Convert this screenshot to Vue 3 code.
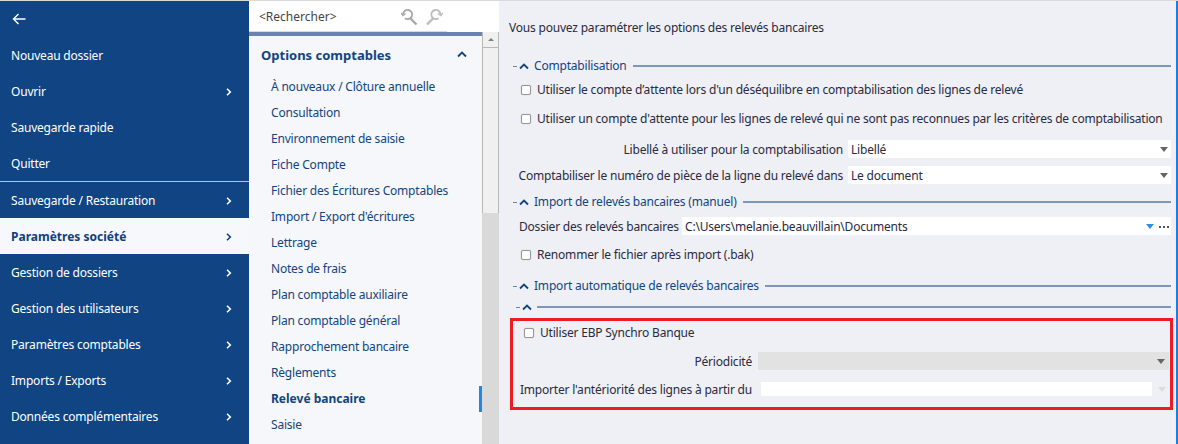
<script setup>
const mainItems = [
  { label: 'Nouveau dossier' },
  { label: 'Ouvrir', arrow: true },
  { label: 'Sauvegarde rapide' },
  { label: 'Quitter' }
]
const lowerItems = [
  { label: 'Sauvegarde / Restauration' },
  { label: 'Paramètres société', active: true },
  { label: 'Gestion de dossiers' },
  { label: 'Gestion des utilisateurs' },
  { label: 'Paramètres comptables' },
  { label: 'Imports / Exports' },
  { label: 'Données complémentaires' }
]
const options = [
  'À nouveaux / Clôture annuelle', 'Consultation', 'Environnement de saisie', 'Fiche Compte',
  'Fichier des Écritures Comptables', "Import / Export d'écritures", 'Lettrage', 'Notes de frais',
  'Plan comptable auxiliaire', 'Plan comptable général', 'Rapprochement bancaire', 'Règlements',
  'Relevé bancaire', 'Saisie'
]
</script>

<template>
  <div class="app">
    <nav class="side">
      <div class="back">
        <svg width="14" height="12" viewBox="0 0 14 12"><path d="M6.500 1 1.500 6l5 5M1.500 6H13.500" fill="none" stroke="#fff" stroke-width="1.400"/></svg>
      </div>
      <div v-for="i in mainItems" :key="i.label" class="nav">
        <span>{{ i.label }}</span>
        <svg v-if="i.arrow" width="6" height="8" viewBox="0 0 6 8"><path d="M1 .8 4.300 4 1 7.200" fill="none" stroke="currentColor" stroke-width="1.600"/></svg>
      </div>
      <div class="sep"></div>
      <div v-for="i in lowerItems" :key="i.label" class="nav" :class="{ active: i.active }">
        <span>{{ i.label }}</span>
        <svg width="6" height="8" viewBox="0 0 6 8"><path d="M1 .8 4.300 4 1 7.200" fill="none" stroke="currentColor" stroke-width="1.600"/></svg>
      </div>
    </nav>

    <section class="mid">
      <div class="search">
        <span class="ph">&lt;Rechercher&gt;</span>
        <svg class="mag" width="18" height="18" viewBox="0 0 18 18" fill="none" stroke="#a9a9a9"><path d="M2 6.500a4.600 4.600 0 1 1 2 3.800" stroke-width="1.800"/><path d="M0 5l2 2.600L4.500 5.500" stroke-width="1.400"/><path d="m9.500 10.500 6 6" stroke-width="2.400"/></svg>
        <svg class="mag" width="18" height="18" viewBox="0 0 18 18" fill="none" stroke="#bdbdbd"><path d="M15.500 6.500a4.600 4.600 0 1 0-2 3.800" stroke-width="1.800"/><path d="M17.800 5l-2 2.600L13 5.500" stroke-width="1.400"/><path d="m8 10.500-6 6" stroke-width="2.400"/></svg>
      </div>
      <div class="midbody">
        <div class="listcol">
          <div class="midbar"></div>
          <div class="opt-title">
            <span>Options comptables</span>
            <svg width="10" height="7" viewBox="0 0 10 7"><path d="M1 5.500 5 1.500l4 4" fill="none" stroke="#12457f" stroke-width="1.800"/></svg>
          </div>
          <div v-for="o in options" :key="o" class="opt" :class="{ sel: o === 'Relevé bancaire' }">{{ o }}</div>
        </div>
        <div class="scroll">
          <div class="sbtn"><i></i></div>
          <div class="strack"></div>
          <div class="sthumb"></div>
        </div>
      </div>
    </section>

    <main class="main">
      <p class="intro">Vous pouvez paramétrer les options des relevés bancaires</p>

      <div class="group g1">
        <span class="dash"></span>
        <svg class="gchev" width="10" height="7" viewBox="0 0 10 7"><path d="M1 5.500 5 1.500l4 4" fill="none" stroke="#12457f" stroke-width="1.800"/></svg>
        <span class="gtitle">Comptabilisation</span>
        <span class="gline"></span>
      </div>
      <label class="check c1"><i class="box"></i>Utiliser le compte d’attente lors d'un déséquilibre en comptabilisation des lignes de relevé</label>
      <label class="check c2"><i class="box"></i>Utiliser un compte d'attente pour les lignes de relevé qui ne sont pas reconnues par les critères de comptabilisation</label>
      <div class="field f1">
        <span class="flabel">Libellé à utiliser pour la comptabilisation</span>
        <div class="input"><span>Libellé</span><i class="tri"></i></div>
      </div>
      <div class="field f2">
        <span class="flabel">Comptabiliser le numéro de pièce de la ligne du relevé dans</span>
        <div class="input"><span>Le document</span><i class="tri"></i></div>
      </div>

      <div class="group g2">
        <span class="dash"></span>
        <svg class="gchev" width="10" height="7" viewBox="0 0 10 7"><path d="M1 5.500 5 1.500l4 4" fill="none" stroke="#12457f" stroke-width="1.800"/></svg>
        <span class="gtitle">Import de relevés bancaires (manuel)</span>
        <span class="gline"></span>
      </div>
      <div class="field f3">
        <span class="flabel">Dossier des relevés bancaires</span>
        <div class="input"><span>C:\Users\melanie.beauvillain\Documents</span><i class="tri blue"></i><b class="dots"><u></u><u></u><u></u></b></div>
      </div>
      <label class="check c3"><i class="box"></i>Renommer le fichier après import (.bak)</label>

      <div class="group g3">
        <span class="dash"></span>
        <svg class="gchev" width="10" height="7" viewBox="0 0 10 7"><path d="M1 5.500 5 1.500l4 4" fill="none" stroke="#12457f" stroke-width="1.800"/></svg>
        <span class="gtitle">Import automatique de relevés bancaires</span>
        <span class="gline"></span>
      </div>
      <div class="group g4">
        <span class="dash"></span>
        <svg class="gchev" width="10" height="7" viewBox="0 0 10 7"><path d="M1 5.500 5 1.500l4 4" fill="none" stroke="#12457f" stroke-width="1.800"/></svg>
        <span class="gline"></span>
      </div>

      <div class="redbox">
        <label class="check c4"><i class="box"></i>Utiliser EBP Synchro Banque</label>
        <div class="field f5">
          <span class="flabel">Périodicité</span>
          <div class="input disabled"><i class="tri"></i></div>
        </div>
        <div class="field f6">
          <span class="flabel">Importer l'antériorité des lignes à partir du</span>
          <div class="input date"></div>
          <i class="tri faint"></i>
        </div>
      </div>
    </main>
    <div class="edge"></div>
  </div>
</template>

<style>
html, body { margin: 0; background: #eff0f5; }
</style>

<style scoped>
.app { position: relative; display: flex; width: 1178px; height: 444px; overflow: hidden; font: 12px/16px "Noto Sans", Tahoma, sans-serif; letter-spacing: -0.2px; color: #2a2a40; background: #eff0f5; }
.app::before { content: ""; position: absolute; left: 0; right: 0; top: 0; height: 1px; background: #d9d9d9; z-index: 1; }

.side { width: 249px; flex: none; background: #104483; color: #fff; padding-top: 1px; box-sizing: border-box; }
.back { height: 36px; display: flex; align-items: center; padding-left: 12px; }
.nav { height: 36px; box-sizing: border-box; display: flex; align-items: center; justify-content: space-between; padding: 2px 17px 0 11px; }
.nav.active { background: #f6f8fb; color: #12407c; font-weight: 700; letter-spacing: 0; }
.sep { height: 1px; background: #b9c6d9; }

.mid { width: 250px; flex: none; display: flex; flex-direction: column; background: #f5f7fa; }
.search { position: relative; height: 32px; flex: none; box-sizing: border-box; background: #fff; display: flex; align-items: center; padding: 1px 0 0 10px; color: #444; letter-spacing: 0; }
.search::after { content: ""; position: absolute; left: 0; bottom: 0; width: 198px; height: 1px; background: #d9d9d9; }
.ph { width: 142px; }
.mag { margin-right: 6px; }
.midbody { flex: 1; display: flex; min-height: 0; }
.listcol { width: 233px; color: #12457f; }
.midbar { height: 4px; background: #6b84ad; }
.opt-title { height: 37px; margin-bottom: 1px; display: flex; align-items: center; justify-content: space-between; padding: 0 15px 0 12px; font-weight: 700; font-size: 13px; letter-spacing: 0; }
.opt { height: 26px; line-height: 26px; padding-left: 22px; }
.opt.sel { position: relative; font-weight: 700; letter-spacing: 0; }
.opt.sel::after { content: ""; position: absolute; right: 0; top: 0; width: 3px; height: 26px; background: #1e88e5; }
.scroll { width: 17px; display: flex; flex-direction: column; }
.sbtn { height: 16px; box-sizing: border-box; border: 1px solid #b8b8b8; border-width: 0 1px 1px; display: flex; align-items: center; justify-content: center; background: #f0f0f0; }
.sbtn i { border: 3px solid transparent; border-bottom: 3px solid #808080; border-top: 0; }
.strack { height: 165px; box-sizing: border-box; background: #f0f0f0; border: 1px solid #b8b8b8; border-width: 0 1px; }
.sthumb { flex: 1; background: #d9d9d9; }

.main { width: 677px; flex: none; box-sizing: border-box; padding: 20px 5px 0 14px; }
.edge { width: 2px; flex: none; background: #1a7fe0; }
.intro { margin: 0 0 0 -4px; white-space: nowrap; }

.group { display: flex; align-items: center; height: 16px; color: #12457f; }
.dash { width: 4px; height: 1px; background: #6b84ad; margin-right: 2px; }
.gchev { margin-right: 5px; }
.gtitle { margin-right: 6px; white-space: nowrap; }
.gline { flex: 1; height: 2px; background: #7d97bb; }
.g1 { margin-top: 22px; }
.g2 { margin-top: 10px; }
.g3 { margin-top: 15px; }
.g4 { margin: 5px 0 0 3px; }

.check { display: flex; align-items: center; white-space: nowrap; height: 16px; margin-left: 8px; }
.box { width: 8px; height: 8px; border: 1px solid #969696; border-radius: 2px; background: #fff; margin-right: 6px; flex: none; box-shadow: 0 0 1px #a8a8a8; }
.c1 { margin-top: 8px; }
.c2 { margin-top: 13px; }
.c3 { margin-top: 12px; }

.field { display: flex; align-items: center; height: 18px; }
.flabel { width: 330px; flex: none; text-align: right; white-space: nowrap; margin-right: 5px; padding-top: 2px; }
.input { flex: 1; height: 18px; background: #fff; display: flex; align-items: center; padding-left: 3px; }
.input span { padding-top: 2px; }
.f1 { margin-top: 13px; }
.f2 { margin-top: 8px; }
.f3 { margin-top: 7px; padding-left: 6px; }
.f3 .flabel { width: 157px; margin-right: 6px; text-align: left; }

.tri { margin-left: auto; margin-right: 3px; border: 4px solid transparent; border-top: 5px solid #666; border-bottom: 0; flex: none; }
.tri.blue { border-top-color: #2f8fe8; margin-right: 5px; }
.dots { display: flex; gap: 2px; margin-right: 2px; margin-top: 2px; }
.dots u { width: 2px; height: 2px; background: #555; }

.redbox { width: 663px; height: 92px; margin: 3px 0 0 -3px; border: 3px solid #ed1c24; box-sizing: border-box; }
.c4 { margin: 4px 0 0 11px; }
.redbox .flabel { width: 239px; margin-right: 6px; }
.f5 { margin: 11px 1px 0 0; }
.f5 .input { padding-left: 0; }
.f5 .tri { margin-right: 4px; }
.disabled { background: #e2e2e2; }
.f6 { margin-top: 12px; height: 14px; }
.f6 .flabel { margin-right: 9px; }
.date { height: 14px; }
.tri.faint { border-top-color: #dcdcdc; margin: 0 4px 0 6px; }
</style>
